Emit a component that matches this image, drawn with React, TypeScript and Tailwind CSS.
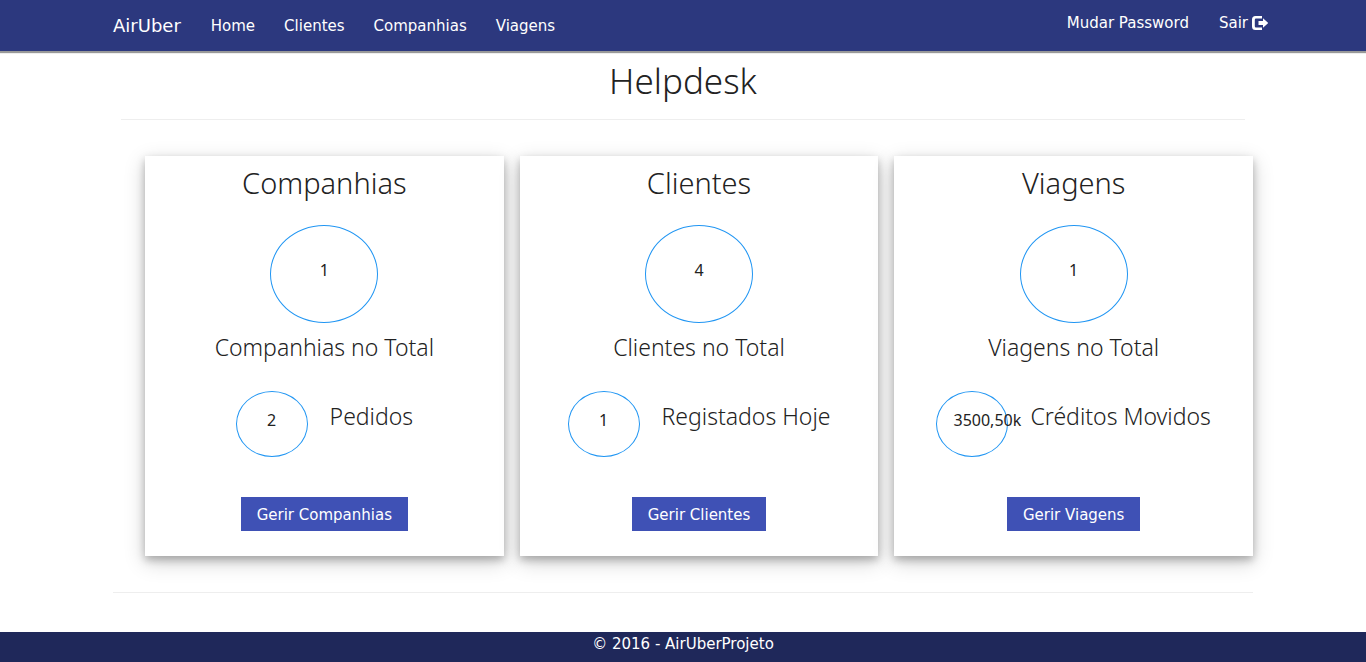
type Summary = {
  title: string;
  total: string;
  totalLabel: string;
  count: string;
  countLabel: string;
  action: string;
};

const summaries: Summary[] = [
  { title: "Companhias", total: "1", totalLabel: "Companhias no Total", count: "2", countLabel: "Pedidos", action: "Gerir Companhias" },
  { title: "Clientes", total: "4", totalLabel: "Clientes no Total", count: "1", countLabel: "Registados Hoje", action: "Gerir Clientes" },
  { title: "Viagens", total: "1", totalLabel: "Viagens no Total", count: "3500,50k", countLabel: "Créditos Movidos", action: "Gerir Viagens" },
];

const links = ["Home", "Clientes", "Companhias", "Viagens"];

function LogOutIcon() {
  return (
    <svg viewBox="0 0 16 14" className="h-3.5 w-4" fill="currentColor" aria-hidden="true">
      <path d="M10 0H3.500A3.500 3.500 0 0 0 0 3.500v7A3.500 3.500 0 0 0 3.500 14H10v-2.500H4A1.200 1.200 0 0 1 2.800 10.300V3.700A1.200 1.200 0 0 1 4 2.500h6z" />
      <path d="M11 2.300 16.200 7l-5.200 4.700V9H6.500V5H11z" />
    </svg>
  );
}

function SummaryCard({ item }: { item: Summary }) {
  return (
    <section className="flex flex-1 flex-col items-center bg-white pt-[9px] pb-[25px] shadow-[0_4px_8px_0_rgba(0,0,0,0.25),0_6px_20px_0_rgba(0,0,0,0.19)]">
      <h2 className="text-[29px] leading-9 font-[350]">{item.title}</h2>
      <div className="mt-6 h-[98px] w-[108px] rounded-[50%] border border-[#2196f3] pt-8 text-center text-base leading-6">
        {item.total}
      </div>
      <h3 className="mt-2 text-[23px] leading-8 font-[350]">{item.totalLabel}</h3>
      <div className="mt-7 flex gap-[22px]">
        <div className="h-[66px] w-[72px] rounded-[50%] border border-[#2196f3] px-4 pt-4 text-center text-base leading-6 whitespace-nowrap">
          {item.count}
        </div>
        <h3 className="mt-[9px] text-[23px] leading-8 font-[350] whitespace-nowrap">{item.countLabel}</h3>
      </div>
      <button type="button" className="mt-10 h-[34px] cursor-pointer bg-[#3f51b5] px-4 pt-0.5 font-['DejaVu_Sans',sans-serif] text-[15px] text-white">
        {item.action}
      </button>
    </section>
  );
}

export default function App() {
  return (
    <div className="flex min-h-screen flex-col bg-white font-['Noto_Sans',sans-serif] text-[#222]">
      <header className="bg-[#2c387e] font-['DejaVu_Sans',sans-serif] text-[15px] leading-5 text-white shadow-[0_1px_1px_1px_rgba(0,0,0,0.4)]">
        <nav className="mx-auto flex h-[51px] max-w-[1140px] items-center">
          <a href="#" className="mr-[30px] text-lg">AirUber</a>
          <div className="flex gap-[29px]">
            {links.map((link) => (
              <a key={link} href="#">{link}</a>
            ))}
          </div>
          <div className="-mr-[15px] ml-auto flex gap-[30px] pb-1.5">
            <a href="#">Mudar Password</a>
            <a href="#" className="flex items-center gap-1">Sair <LogOutIcon /></a>
          </div>
        </nav>
      </header>
      <main className="mx-auto w-full max-w-[1140px] flex-1">
        <h1 className="pt-1.5 text-center text-[35px] leading-[48px] font-[350]">Helpdesk</h1>
        <hr className="mx-2 mt-3.5 border-[#eee]" />
        <div className="mt-9 ml-8 flex gap-4">
          {summaries.map((item) => (
            <SummaryCard key={item.title} item={item} />
          ))}
        </div>
        <hr className="mt-9 border-[#eee]" />
      </main>
      <footer className="h-[30px] bg-[#1f285a] text-center font-['DejaVu_Sans',sans-serif] text-[15px] leading-6 text-white">
        © 2016 - AirUberProjeto
      </footer>
    </div>
  );
}
